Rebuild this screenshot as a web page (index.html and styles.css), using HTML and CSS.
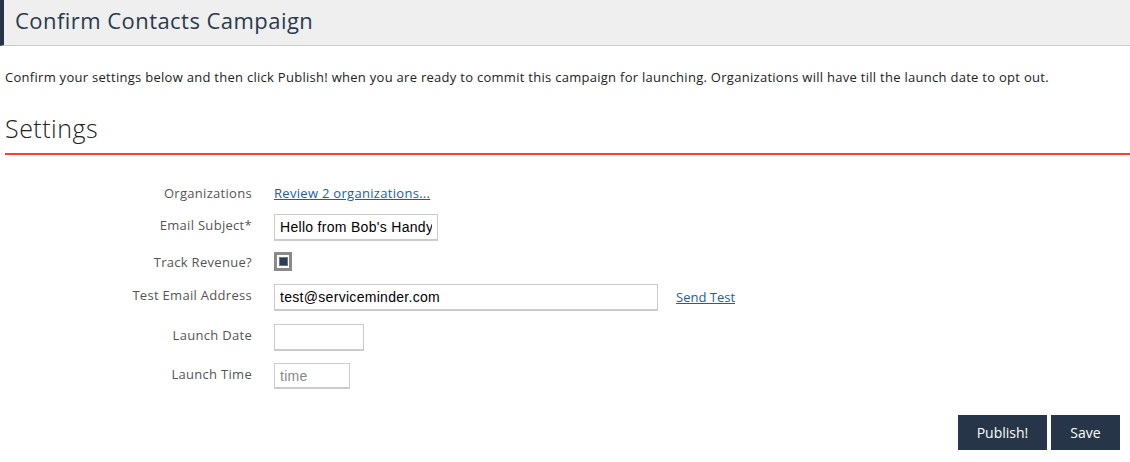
FILE: index.html
```html
<!DOCTYPE html>
<html>
<head>
<meta charset="utf-8">
<link rel="stylesheet" href="styles.css">
</head>
<body>
<div class="page-header"><h1 class="page-title">Confirm Contacts Campaign</h1></div>
<p class="intro">Confirm your settings below and then click Publish! when you are ready to commit this campaign for launching. Organizations will have till the launch date to opt out.</p>
<h2 class="section-title">Settings</h2>
<div class="form">
  <div class="row row-orgs">
    <label class="label">Organizations</label>
    <a class="link" href="#">Review 2 organizations...</a>
  </div>
  <div class="row row-subject">
    <label class="label">Email Subject*</label>
    <input class="input input-subject" type="text" value="Hello from Bob's Handyman Service">
  </div>
  <div class="row row-track">
    <label class="label">Track Revenue?</label>
    <span class="checkbox"><span class="checkbox-mark"></span></span>
  </div>
  <div class="row row-test">
    <label class="label">Test Email Address</label>
    <input class="input input-email" type="text" value="test@serviceminder.com">
    <a class="link link-send" href="#">Send Test</a>
  </div>
  <div class="row row-date">
    <label class="label">Launch Date</label>
    <input class="input input-date" type="text" value="">
  </div>
  <div class="row row-time">
    <label class="label">Launch Time</label>
    <input class="input input-time" type="text" placeholder="time">
  </div>
</div>
<div class="actions">
  <button class="btn btn-publish">Publish!</button>
  <button class="btn btn-save">Save</button>
</div>
</body>
</html>
```

FILE: styles.css
```css
html, body {
  margin: 0;
  padding: 0;
  background: #fff;
}
body {
  font-family: "Open Sans", "Lato", sans-serif;
  color: #222;
  width: 1130px;
}
.page-header {
  box-sizing: border-box;
  height: 46px;
  background: #efefef;
  border-left: 4px solid #263547;
  border-bottom: 1px solid #c9c9c9;
  display: flex;
  align-items: center;
  padding-left: 11px;
  padding-bottom: 5px;
}
.page-title {
  margin: 0;
  font-size: 22px;
  font-weight: 400;
  color: #2a3a4e;
  letter-spacing: 0.45px;
}
.intro {
  margin: 22px 0 0 5px;
  font-size: 13px;
  line-height: 18px;
  color: #222;
  letter-spacing: 0.28px;
}
.section-title {
  margin: 26px 0 0 5px;
  font-size: 25px;
  font-weight: 300;
  line-height: 32px;
  color: #222;
  letter-spacing: 0.5px;
  padding-bottom: 9px;
  border-bottom: 2px solid #f04823;
}
.form {
  display: flex;
  flex-direction: column;
  margin-top: 29px;
}
.row {
  display: flex;
  align-items: flex-start;
  gap: 22px;
}
.label {
  width: 252px;
  flex: none;
  text-align: right;
  font-size: 13px;
  line-height: 16px;
  color: #555;
  letter-spacing: 0.3px;
  padding-top: 3px;
}
.row-orgs .label { padding-top: 1px; }
.row-subject { margin-top: 12px; }
.row-track { margin-top: 10px; }
.row-test { margin-top: 13px; }
.row-date { margin-top: 13px; }
.row-time { margin-top: 12px; }
.link {
  font-size: 13px;
  line-height: 18px;
  color: #1a5ea8;
  letter-spacing: 0.3px;
  text-decoration: underline;
}
.link-send {
  margin-left: -4px;
  padding-top: 4px;
  letter-spacing: 0;
}
.input {
  box-sizing: border-box;
  height: 27px;
  border: 1px solid #cbcbcb;
  border-bottom-width: 2px;
  padding: 0 5px;
  font-family: "Liberation Sans", Arial, sans-serif;
  font-size: 14px;
  letter-spacing: 0.3px;
  color: #000;
  background: #fff;
  outline: none;
}
.input::placeholder {
  color: #888;
}
.input-subject { width: 164px; }
.input-email { width: 384px; }
.input-date { width: 90px; }
.input-time { width: 76px; height: 26px; }
.checkbox {
  box-sizing: border-box;
  width: 18px;
  height: 19px;
  border: 3px solid #8a8a8a;
  display: flex;
  align-items: center;
  justify-content: center;
  margin-top: 1px;
}
.checkbox-mark {
  width: 7px;
  height: 7px;
  background: #2e3e52;
  border: 1px solid #6b7685;
}
.actions {
  display: flex;
  justify-content: flex-end;
  gap: 4px;
  padding-right: 10px;
  margin-top: 26px;
}
.btn {
  height: 35px;
  border: none;
  background: #263547;
  color: #fff;
  font-family: "Open Sans", "Lato", sans-serif;
  font-size: 14px;
  padding: 0;
}
.btn-publish { width: 89px; }
.btn-save { width: 69px; }
```
